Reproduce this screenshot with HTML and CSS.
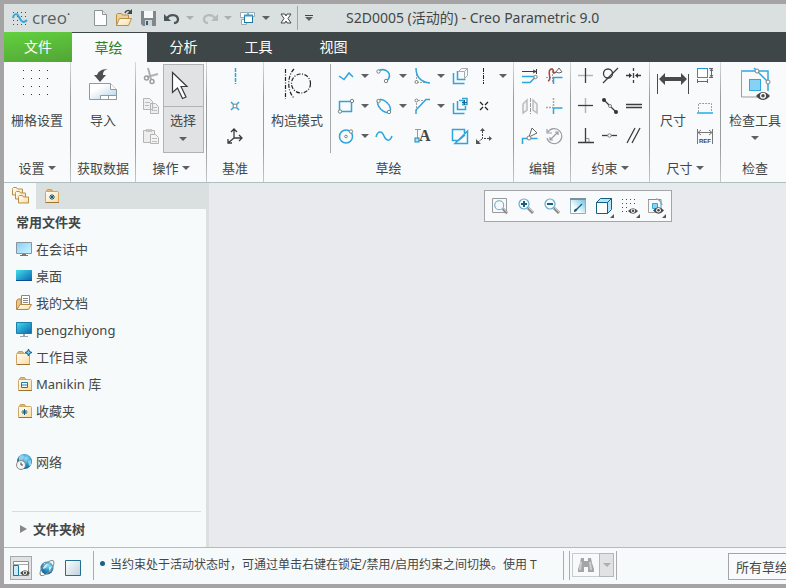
FILE: index.html
```html
<!DOCTYPE html>
<html lang="zh-CN">
<head>
    <meta charset="UTF-8">
    <title>S2D0005 (活动的) - Creo Parametric 9.0</title>
    <link rel="stylesheet" href="styles.css">
</head>
<body>
    <svg class="defs" aria-hidden="true">
        <defs>
            <linearGradient id="g-folder" x1="0" y1="0" x2="1" y2="1"><stop offset="0" stop-color="#fff"/><stop offset="1" stop-color="#fbdc9c"/></linearGradient>
            <linearGradient id="g-screen" x1="0" y1="0" x2="1" y2="1"><stop offset="0" stop-color="#3fe0ea"/><stop offset="1" stop-color="#0d62b0"/></linearGradient>
            <linearGradient id="g-light" x1="0" y1="0" x2="1" y2="1"><stop offset="0" stop-color="#7fd0fb"/><stop offset="1" stop-color="#d4f4ff"/></linearGradient>
            <linearGradient id="g-paper" x1="0" y1="0" x2="1" y2="1"><stop offset="0.3" stop-color="#fff"/><stop offset="1" stop-color="#b4cfe4"/></linearGradient>
            <linearGradient id="g-pane" x1="0" y1="0" x2="1" y2="1"><stop offset="0" stop-color="#fff"/><stop offset="1" stop-color="#bcd2dc"/></linearGradient>
            <radialGradient id="g-globe" cx="0.6" cy="0.3" r="0.8"><stop offset="0" stop-color="#8fe0fa"/><stop offset="0.5" stop-color="#2b93c4"/><stop offset="1" stop-color="#12507e"/></radialGradient>
            <linearGradient id="g-sky" x1="1" y1="0" x2="0" y2="1"><stop offset="0" stop-color="#62bfe0"/><stop offset="0.7" stop-color="#fff"/></linearGradient>
            <symbol id="folder" viewBox="0 0 16 16">
                <path d="M2 3.500l1.500-2h4l1.500 2" fill="#dfb978" stroke="#c9a05a"/>
                <rect x="1.500" y="3.500" width="13" height="11" rx="1" fill="url(#g-folder)" stroke="#cfa663"/>
                <path d="M1.500 14.500h13.500" stroke="#9c7333"/>
            </symbol>
            <symbol id="folder-small" viewBox="0 0 11 9">
                <path d="M0.500 2.500v-1l1-1h3l1 1.500h5v6h-10z" fill="url(#g-folder)" stroke="#b98f4c"/>
            </symbol>
            <symbol id="eye" viewBox="0 0 14 10">
                <path d="M0 5Q7-3 14 5Q7 13 0 5z" fill="#4b4b4b"/>
                <circle cx="7" cy="4.700" r="3" fill="#fff"/><circle cx="7" cy="4.700" r="1.700" fill="#4b4b4b"/>
            </symbol>
            <symbol id="lens" viewBox="0 0 18 18">
                <path d="M11 11l5 5" stroke="#8c8c8c" stroke-width="3"/><path d="M11.500 10.500l5 5" stroke="#d0d0d0"/>
                <circle cx="7" cy="7" r="5" fill="#f4fbff" stroke="#6eaac8" stroke-width="1.200"/>
            </symbol>
        </defs>
    </svg>

    <header class="titlebar">
        <div class="logo">
            <svg width="16" height="16" viewBox="0 0 16 16"><path class="dots" d="M1 2.500h15M1 6.500h15M1 10.500h15M1 14.500h15"/><path d="M1 8C2 3 5 3 7 7s4 7 8 3" fill="none" stroke="#35a8e0" stroke-width="2"/></svg>
            <span class="brand">creo<sup>•</sup></span>
        </div>
        <div class="quick-main">
            <button class="icon" aria-label="新建"><svg viewBox="0 0 18 18"><path d="M3.500 1.500h8l4 4v11h-12z" fill="#fdfdfd" stroke="#8d9494"/><path d="M11.500 1.500v4h4" fill="#e6eaea" stroke="#8d9494"/></svg></button>
            <button class="icon" aria-label="打开"><svg viewBox="0 0 18 18"><path d="M1.500 16.500v-11l1-1h4l1 1.500h6v4" fill="#edd09a" stroke="#b98f48"/><path d="M1.500 16.500l3-7h12l-3 7z" fill="url(#g-folder)" stroke="#b98f48"/><path d="M10 4c1-3 4-3 6-1" fill="none" stroke="#3c4444" stroke-width="1.500"/><path d="M17 0v5h-5z" fill="#3c4444"/></svg></button>
            <button class="icon" aria-label="保存"><svg viewBox="0 0 18 18"><path d="M2 2h15v15H4l-2-2z" fill="#7f898c"/><path d="M5 2h9v7H5z" fill="#f7f9f9"/><path d="M6 11h7v6H6z" fill="#cfd6d8"/><path d="M7 12h2v4H7z" fill="#3c5c74"/></svg></button>
            <button class="icon" aria-label="撤消"><svg viewBox="0 0 18 18"><path d="M4 9c3-4 10-4 11 1 0 2-1 4-4 4" fill="none" stroke="#4b5557" stroke-width="2.300"/><path d="M1 5v7h7z" fill="#4b5557"/></svg></button>
        </div>
        <div class="quick-more">
            <button class="drop pale" aria-label="撤消列表"></button>
            <button class="icon" aria-label="重做"><svg viewBox="0 0 18 18"><path d="M14 9C11 5 4 5 3 10c0 2 1 4 4 4" fill="none" stroke="#b3bbbb" stroke-width="2.300"/><path d="M17 5v7h-7z" fill="#b3bbbb"/></svg></button>
            <button class="drop pale" aria-label="重做列表"></button>
            <button class="icon" aria-label="窗口"><svg viewBox="0 0 18 18"><path d="M1.500 3.500h7v5h-7zM9.500 3.500h6v4h-6zM2.500 10.500h5v5h-5z" fill="#fff" stroke="#9aa9ae"/><rect x="5.500" y="6.500" width="8" height="7" fill="#fff" stroke="#23799c"/><path d="M5 6.500h9" stroke="#2f9dca" stroke-width="2"/></svg></button>
            <button class="drop" aria-label="窗口列表"></button>
            <button class="icon" aria-label="关闭"><svg viewBox="0 0 18 18"><path d="M4 5h4l1 2 1-2h4l-3 4.500 3 4.500h-4l-1-2-1 2H4l3-4.500z" fill="#fff" stroke="#454a44"/></svg></button>
        </div>
        <button class="drop customize" aria-label="自定义"></button>
        <h1 class="title">S2D0005 (活动的) - Creo Parametric 9.0</h1>
    </header>

    <nav class="tabs">
        <button class="tab file">文件</button>
        <button class="tab active">草绘</button>
        <button class="tab">分析</button>
        <button class="tab">工具</button>
        <button class="tab">视图</button>
    </nav>

    <div class="ribbon">
        <section class="group g-setup">
            <div class="tools">
                <button class="big"><svg viewBox="0 0 34 34"><path class="dots-wide" d="M3 3.500h28M3 11.500h28M3 19.500h28M3 27.500h28"/></svg><span>栅格设置</span></button>
            </div>
            <button class="caption more">设置</button>
        </section>

        <section class="group g-data">
            <div class="tools">
                <button class="big"><svg viewBox="0 0 34 34"><path d="M3.500 16.500h21l6 6v10h-27z" fill="url(#g-paper)" stroke="#8e9ca2"/><path d="M24.500 16.500v6h6" fill="#fff" stroke="#8e9ca2"/><path d="M14.500 28.500h16v4h-16zM22.500 28.500v4" fill="#fff" stroke="#8e9ca2"/><path d="M22 2c-7 0-10 3-11 6H8l6 7 6-7h-3c0-3 1-5 5-6z" fill="#4d4f50"/></svg><span>导入</span></button>
            </div>
            <div class="caption">获取数据</div>
        </section>

        <section class="group g-ops">
            <div class="tools">
                <div class="stack">
                    <button class="icon" aria-label="剪切"><svg viewBox="0 0 18 18"><path d="M6 1l3 11M16 7L5 10" stroke="#aeb2b2" stroke-width="2"/><circle cx="4.500" cy="11" r="2" fill="none" stroke="#9b9f9f" stroke-width="1.500"/><circle cx="10" cy="14.500" r="2" fill="none" stroke="#9b9f9f" stroke-width="1.500"/></svg></button>
                    <button class="icon" aria-label="复制"><svg viewBox="0 0 18 18"><path d="M1.500 1.500h6l3 3v8h-9zM8.500 6.500h5l3 3v7h-8z" fill="#efefef" stroke="#b4b4b4"/><path d="M3 5.500h5M3 8.500h4M10 10.500h5M10 13.500h5" stroke="#bdbdbd"/></svg></button>
                    <button class="icon" aria-label="粘贴"><svg viewBox="0 0 18 18"><path d="M1.500 3.500h11v12h-11z" fill="#ededed" stroke="#b4b4b4"/><path d="M4 2h6v3H4z" fill="#c4c4c4"/><path d="M8.500 7.500h5l3 3v6h-8z" fill="#f4f4f4" stroke="#b4b4b4"/><path d="M10 11.500h5M10 14.500h5" stroke="#bdbdbd"/></svg></button>
                </div>
                <div class="select">
                    <button class="select-icon" aria-label="选择"><svg width="24" height="32" viewBox="0 0 24 32"><path d="M4.500 2.500v20l5-4.500 5 10.500 3.500-1.500-5-10.500h6z" fill="#fff" stroke="#3b3b3b" stroke-width="1.200"/></svg></button>
                    <button class="select-text">选择</button>
                </div>
            </div>
            <button class="caption more">操作</button>
        </section>

        <section class="group g-datum">
            <div class="tools">
                <div class="stack">
                    <button class="icon" aria-label="中心线"><svg viewBox="0 0 18 18"><path class="bl" d="M9.500 1v16" stroke-dasharray="4 1"/></svg></button>
                    <button class="icon" aria-label="点"><svg viewBox="0 0 18 18"><path class="bl" d="M5 5l8 8M13 5l-8 8"/><circle class="pt" cx="9" cy="9" r="2"/></svg></button>
                    <button class="icon" aria-label="坐标系"><svg viewBox="0 0 18 18"><path class="dk thick" d="M8 2v9h8M8 11l-6 5M5 5l3-3 3 3M13 8l3 3-3 3M2 12v4h4"/></svg></button>
                </div>
            </div>
            <div class="caption">基准</div>
        </section>

        <section class="group g-sketch">
            <div class="tools">
                <button class="big construct"><svg viewBox="0 0 34 34"><g fill="none" stroke="#222" stroke-width="1.200" stroke-dasharray="4 1.500 1 1.500"><path d="M5.500 2v30"/><path d="M14 2C7 9 7 24 14 31"/><circle cx="21" cy="16.500" r="9.500"/></g></svg><span>构造模式</span></button>
                <div class="grid sketch-grid">
                    <div class="cell"><button class="icon" aria-label="线"><svg viewBox="0 0 18 18"><path class="bl" d="M2 9l5 3.500 5-6.500 4 4"/></svg></button><button class="drop" aria-label="线选项"></button></div>
                    <div class="cell"><button class="icon" aria-label="弧"><svg viewBox="0 0 18 18"><path class="bl" d="M3 4c8-4 16 3 8 11"/><circle class="pt" cx="3.500" cy="4.500" r="1.700"/><circle class="pt" cx="11" cy="14" r="1.700"/></svg></button><button class="drop" aria-label="弧选项"></button></div>
                    <div class="cell"><button class="icon" aria-label="圆角"><svg viewBox="0 0 18 18"><path class="dash" d="M3.500 4v11.500h12"/><path class="bl" d="M3 1c0 9 5 14 14 15"/><circle class="pt" cx="3.500" cy="15" r="1.500"/></svg></button><button class="drop" aria-label="圆角选项"></button></div>
                    <div class="cell"><button class="icon" aria-label="偏移"><svg viewBox="0 0 18 18"><path d="M7.500 4.500h6v7M7.500 4.500l3-3h6v7l-3 3M13.500 4.500l3-3" fill="none" stroke="#a8acad"/><path class="bl" d="M2.500 6v10.500h11M6.500 4v8.500h8"/></svg></button></div>
                    <div class="cell"><button class="icon" aria-label="构造中心线"><svg viewBox="0 0 18 18"><path d="M8.500 1v16" stroke="#222" stroke-dasharray="4 1 1 1"/></svg></button><button class="drop" aria-label="中心线选项"></button></div>

                    <div class="cell"><button class="icon" aria-label="矩形"><svg viewBox="0 0 18 18"><rect class="bl" x="2.500" y="4.500" width="12" height="10"/><circle class="pt" cx="15" cy="4" r="1.700"/><circle class="pt" cx="3" cy="14.500" r="1.700"/></svg></button><button class="drop" aria-label="矩形选项"></button></div>
                    <div class="cell"><button class="icon" aria-label="椭圆"><svg viewBox="0 0 18 18"><ellipse class="bl" cx="9" cy="9" rx="8" ry="4.500" transform="rotate(45 9 9)"/><circle class="pt" cx="3.500" cy="4" r="1.700"/><circle class="pt" cx="14" cy="15" r="1.700"/></svg></button><button class="drop" aria-label="椭圆选项"></button></div>
                    <div class="cell"><button class="icon" aria-label="倒角"><svg viewBox="0 0 18 18"><path class="dash" d="M3.500 14V3.500H12"/><path class="bl" d="M17 2.500h-4L3 13v4"/><circle class="pt" cx="3.500" cy="3.500" r="1.500"/></svg></button><button class="drop" aria-label="倒角选项"></button></div>
                    <div class="cell"><button class="icon" aria-label="加厚"><svg viewBox="0 0 18 18"><path class="bl" d="M2.500 6v10.500h11M6.500 4v8.500h8V9"/><path class="bl" d="M8 3.500h4.500v5M11 1.500h5v6h-5"/><path d="M13.500 3v5M11 5.500h5" stroke="#18688f"/></svg></button></div>
                    <div class="cell"><button class="icon" aria-label="构造点"><svg viewBox="0 0 18 18"><path d="M5 5l3 3M13 5l-3 3M5 13l3-3M13 13l-3-3" stroke="#222" stroke-width="1.300"/></svg></button></div>

                    <div class="cell"><button class="icon" aria-label="圆"><svg viewBox="0 0 18 18"><circle class="bl" cx="9" cy="9.500" r="6.500"/><circle class="pt" cx="9" cy="9.500" r="1.300"/><circle class="pt" cx="14" cy="4.500" r="1.700"/></svg></button><button class="drop" aria-label="圆选项"></button></div>
                    <div class="cell"><button class="icon" aria-label="样条"><svg viewBox="0 0 18 18"><path class="bl" d="M1 10c2-7 6-6 8-1s6 6 8 0"/></svg></button></div>
                    <div class="cell"><button class="icon" aria-label="文本"><svg viewBox="0 0 18 18"><path d="M2 2.500h6M4.500 3v9" fill="none" stroke="#9a9a9a"/><text class="letter" x="6" y="14">A</text><rect x="2" y="11" width="4" height="4" fill="#a9e2f8" stroke="#1f86b4"/></svg></button></div>
                    <div class="cell"><button class="icon" aria-label="投影"><svg viewBox="0 0 18 18"><path class="bl" d="M1.500 2.500h12v6l-6 5h-6zM16.500 4v12.500H4z"/></svg></button></div>
                    <div class="cell"><button class="icon" aria-label="构造坐标系"><svg viewBox="0 0 18 18"><path d="M7.500 4v7.500h7M7 12l-4 3" fill="none" stroke="#444" stroke-dasharray="2 1"/><path d="M5 4l2.500-3 2.500 3zM14 9l3 2.500-3 2.500zM1 12v5h5z" fill="#555"/></svg></button></div>
                </div>
            </div>
            <div class="caption">草绘</div>
        </section>

        <section class="group g-edit">
            <div class="tools">
                <div class="grid cols-2">
                    <button class="icon" aria-label="修改"><svg viewBox="0 0 18 18"><path class="dk" d="M1 4.500h15M15.500 2v5M12 3l3 1.500-3 1.500"/><path class="bl" d="M1 9.500h12M1 15.500h8l5-5"/><circle class="pt" cx="14.500" cy="10" r="1.700"/></svg></button>
                    <button class="icon" aria-label="删除段"><svg viewBox="0 0 18 18"><path class="dash" d="M1 10.500h8M7.500 1v15"/><path d="M3 14c5-1-2-10 3-12 5 0 0 7 5 3" fill="none" stroke="#b14139" stroke-width="1.500"/><path d="M11 5l3-4 3 4-3 1z" fill="#fff" stroke="#666"/><path class="bl" d="M8.500 17v-6.500h9"/></svg></button>
                    <button class="icon" aria-label="镜像"><svg viewBox="0 0 18 18"><path d="M2 16V7l4-4v10zM16 16V7l-4-4v10z" fill="#f4f4f4" stroke="#bcbcbc" stroke-width="1.500"/><path d="M9.500 1v16" stroke="#999" stroke-dasharray="4 1"/></svg></button>
                    <button class="icon" aria-label="拐角"><svg viewBox="0 0 18 18"><path d="M8.500 1v8M1 10.500h7" stroke="#a9a9a9" stroke-width="1.500" stroke-dasharray="2 1"/><path class="bl" d="M8.500 17v-6h9"/></svg></button>
                    <button class="icon" aria-label="分割"><svg viewBox="0 0 18 18"><path class="bl" d="M1.500 17v-5.500h15"/><path d="M8 10l3-9 5 5z" fill="#fff" stroke="#666"/><circle class="pt" cx="8" cy="11" r="2"/></svg></button>
                    <button class="icon" aria-label="旋转调整大小"><svg viewBox="0 0 18 18"><path d="M3 5a7.500 7.500 0 1 1-1 6M2 2v4h5M5 13l8-8M5 10v3h3M10 5h3v3" fill="none" stroke="#9b9fa0" stroke-width="1.200"/></svg></button>
                </div>
            </div>
            <div class="caption">编辑</div>
        </section>

        <section class="group g-constrain">
            <div class="tools">
                <div class="grid cols-3">
                    <button class="icon" aria-label="竖直"><svg viewBox="0 0 18 18"><path class="gy" d="M1 8.500h15"/><path class="dk thick" d="M8.500 1v15"/></svg></button>
                    <button class="icon" aria-label="相切"><svg viewBox="0 0 18 18"><circle class="dk thick" cx="7" cy="6.500" r="4.500"/><path class="dk thick" d="M2 16L17 1"/></svg></button>
                    <button class="icon" aria-label="对称"><svg viewBox="0 0 18 18"><path class="dk thick" d="M8.500 1v3M8.500 6v5M8.500 13v3M1 8.500h4M12 8.500h4"/><path d="M4 6l3 2.500-3 2.500zM13 6l-3 2.500 3 2.500z" fill="#333"/></svg></button>
                    <button class="icon" aria-label="水平"><svg viewBox="0 0 18 18"><path class="gy" d="M8.500 1v15"/><path class="dk thick" d="M1 8.500h15"/></svg></button>
                    <button class="icon" aria-label="中点"><svg viewBox="0 0 18 18"><path class="dk thick" d="M3 3l12 12"/><circle cx="3" cy="3" r="2" fill="#333"/><circle cx="15" cy="15" r="2" fill="#333"/><circle class="pt" cx="9" cy="9" r="1.500"/></svg></button>
                    <button class="icon" aria-label="相等"><svg viewBox="0 0 18 18"><path class="dk thick" d="M1 7.500h16M1 10.500h16"/></svg></button>
                    <button class="icon" aria-label="垂直"><svg viewBox="0 0 18 18"><path d="M9 11.500h3v4" fill="none" stroke="#999"/><path class="dk thick" d="M8.500 1v14M1 15.500h16"/></svg></button>
                    <button class="icon" aria-label="重合"><svg viewBox="0 0 18 18"><path class="dk thick" d="M1 8.500h15"/><circle class="pt" cx="8.500" cy="8.500" r="1.700"/></svg></button>
                    <button class="icon" aria-label="平行"><svg viewBox="0 0 18 18"><path class="dk thick" d="M2 16L10 1M7 16l8-15"/></svg></button>
                </div>
            </div>
            <button class="caption more">约束</button>
        </section>

        <section class="group g-dim">
            <div class="tools">
                <button class="big"><svg viewBox="0 0 34 34"><path d="M1.500 7v20M32.500 7v20" stroke="#4a4a4a"/><path d="M3 12l6-6v4h16V6l6 6-6 6v-4H9v4z" fill="#4a4a4a"/></svg><span>尺寸</span></button>
                <div class="stack">
                    <button class="icon" aria-label="周长"><svg viewBox="0 0 18 18"><rect x="1.500" y="1.500" width="10" height="9" fill="#fff" stroke="#1f96cf"/><path d="M13 1.500h4M13 10.500h4M15.500 2v8M14 4l1.500-2L17 4M14 8l1.500 2L17 8M1.500 12v4M11.500 12v4M2 14.500h9" fill="none" stroke="#666"/></svg></button>
                    <button class="icon" aria-label="基线"><svg viewBox="0 0 18 18"><path class="dash" d="M2.500 15V6.500h13V15"/><path d="M1 16h16" stroke="#55bfee" stroke-width="2"/></svg></button>
                    <button class="icon" aria-label="参考"><svg viewBox="0 0 18 18"><path d="M1.500 2v15M16.500 2v15M2 5.500h14M5 3L2 5.500 5 8M13 3l3 2.500L13 8" fill="none" stroke="#777"/><text class="ref" x="3" y="16">REF</text></svg></button>
                </div>
            </div>
            <button class="caption more">尺寸</button>
        </section>

        <section class="group g-inspect">
            <div class="tools">
                <button class="big more-below"><svg viewBox="0 0 34 34"><path d="M3.500 5v25h18" fill="none" stroke="#9b9b9b"/><path d="M3 4h27v20M16 1l15 15" fill="none" stroke="#2fa8df" stroke-width="1.500"/><rect x="11.500" y="12.500" width="11" height="11" fill="#86d2f5" stroke="#2fa8df"/><circle class="pt" cx="19" cy="4" r="2"/><circle class="pt" cx="30" cy="15" r="2"/><use href="#eye" x="18" y="24" width="14" height="10"/></svg><span>检查工具</span></button>
            </div>
            <div class="caption">检查</div>
        </section>
    </div>

    <main class="workspace">
        <aside class="sidebar">
            <div class="side-tabs">
                <button class="side-tab current" aria-label="文件夹浏览器"><svg width="18" height="18" viewBox="0 0 18 18"><use href="#folder-small" x="1" y="0" width="11" height="9"/><use href="#folder-small" x="4" y="4" width="11" height="9"/><use href="#folder-small" x="7" y="8" width="11" height="9"/></svg></button>
                <button class="side-tab" aria-label="收藏夹"><svg width="16" height="16" viewBox="0 0 16 16"><use href="#folder"/><path class="star" d="M8 6v6M5 9h6M6 7l4 4M10 7l-4 4"/></svg></button>
            </div>
            <div class="places">
                <h2>常用文件夹</h2>
                <a href="#"><svg viewBox="0 0 16 16"><path d="M0.500 1.500h15v11h-15z" fill="url(#g-light)" stroke="#8b9499"/><path d="M6 13h4v1h2v1H4v-1h2z" fill="#777"/></svg>在会话中</a>
                <a href="#"><svg viewBox="0 0 16 16"><path d="M0 2h16v11H0z" fill="url(#g-screen)"/><path d="M0 12.500h16" stroke="#0a4f96"/></svg>桌面</a>
                <a href="#"><svg viewBox="0 0 16 16"><path d="M0.500 14.500V6l1.500-2h3v10z" fill="#e9c88e" stroke="#b38a45"/><path d="M5.500 0.500h8v10h-8z" fill="#fff" stroke="#888"/><path d="M7 3.500h5M7 5.500h5M7 7.500h5" stroke="#888"/><path d="M1 14.500l3-5h11.500l-3 5z" fill="url(#g-folder)" stroke="#b38a45"/></svg>我的文档</a>
                <a href="#"><svg viewBox="0 0 16 16"><path d="M0.500 0.500h15v11h-15z" fill="url(#g-screen)" stroke="#1b7cae"/><path d="M7 12h2v2h3v1H4v-1h3z" fill="#9aa7ad"/></svg>pengzhiyong</a>
                <a href="#"><svg viewBox="0 0 16 16"><use href="#folder" x="-1" y="1" width="16" height="16"/><path d="M12.500 0l1 2.500 2.500 1-2.500 1-1 2.500-1-2.500-2.500-1 2.500-1z" fill="#6ccdf0" stroke="#125c80"/></svg>工作目录</a>
                <a href="#"><svg viewBox="0 0 16 16"><use href="#folder" x="1" width="16" height="16"/><path d="M5.500 6.500h6v5h-6zM5.500 9h6" fill="#fff" stroke="#1b7aa6"/></svg>Manikin 库</a>
                <a href="#"><svg viewBox="0 0 16 16"><use href="#folder" x="1" width="16" height="16"/><path class="star" d="M8.500 6v6M5.500 9h6M6.500 7l4 4M10.500 7l-4 4"/></svg>收藏夹</a>
                <a href="#" class="network"><svg viewBox="0 0 16 16"><circle cx="8.500" cy="7.500" r="7.500" fill="url(#g-globe)"/><path d="M3 3c3-3 5-2 5 0s-2 3-5 4zM12 7l3-1v5l-2 1z" fill="#8fd0ea"/><circle cx="5" cy="11" r="4.500" fill="#f4f4f4" stroke="#8a8a8a"/><path d="M5 8.500V11h2" fill="none" stroke="#444"/></svg>网络</a>
            </div>
            <button class="tree">文件夹树</button>
        </aside>

        <div class="canvas">
            <div class="view-tools">
                <button aria-label="重新调整"><svg viewBox="0 0 18 18"><path d="M1.500 1.500h14v14h-14z" fill="#f9f9f9" stroke="#9a9a9a"/><use href="#lens" x="2" y="2" width="16" height="16"/></svg></button>
                <button aria-label="放大"><svg viewBox="0 0 18 18"><use href="#lens"/><path d="M7 4v6M4 7h6" stroke="#125f88" stroke-width="2"/></svg></button>
                <button aria-label="缩小"><svg viewBox="0 0 18 18"><use href="#lens"/><path d="M4 7h6" stroke="#125f88" stroke-width="2"/></svg></button>
                <button aria-label="重画"><svg viewBox="0 0 18 18"><path d="M1.500 1.500h15v15h-15z" fill="url(#g-sky)" stroke="#8eb0be"/><path d="M1 2h16" stroke="#7d9099" stroke-width="2"/><path d="M5 15c0-4 2-3 4-4-1 3-2 4-4 4z" fill="#165f7c"/><path d="M8 12l5-5" stroke="#165f7c" stroke-width="1.300"/></svg></button>
                <button aria-label="显示样式" class="corner"><svg viewBox="0 0 18 18"><path d="M1.500 5.500h11v11h-11z" fill="#fff" stroke="#145f84"/><path d="M1.500 5.500l4-4h11l-4 4zM12.500 16.500l4-4v-11l-4 4z" fill="#b5e6f8" stroke="#145f84"/></svg></button>
                <button aria-label="栅格显示" class="corner"><svg viewBox="0 0 18 18"><path class="dots" d="M1 2.500h16M1 6.500h16M1 10.500h8M1 14.500h8"/><use href="#eye" x="7" y="10" width="10" height="8"/></svg></button>
                <button aria-label="草绘器显示" class="corner"><svg viewBox="0 0 18 18"><path d="M1.500 3v12.500h7" fill="none" stroke="#a0a0a0"/><path d="M1 2.500h13v9" fill="none" stroke="#2fa8df"/><path d="M5.500 6.500h5v5h-5z" fill="#86d2f5" stroke="#2fa8df"/><path d="M9 2c3 0 5 3 6 6" fill="none" stroke="#9aa4a8" stroke-width="1.500"/><use href="#eye" x="6" y="9" width="11" height="9"/></svg></button>
            </div>
        </div>
    </main>

    <footer class="status">
        <button class="toggle on" aria-label="导航器"><svg viewBox="0 0 18 18"><path d="M1.500 2.500h15v14h-15z" fill="#fff" stroke="#8e8e8e"/><path d="M2 5.500h14" stroke="#aaa"/><path d="M1.500 6.500h5v10h-5z" fill="#c7edfa" stroke="#1a769d"/><use href="#eye" x="8" y="10" width="10" height="8"/></svg></button>
        <button class="toggle" aria-label="浏览器"><svg viewBox="0 0 18 18"><circle cx="9" cy="9" r="6.500" fill="url(#g-globe)"/><path d="M6 4l4 1-2 4-3 1zM11 8l3-1-1 5-2 1z" fill="#c4edfc"/><ellipse cx="9" cy="9" rx="9.500" ry="4" transform="rotate(-48 9 9)" fill="none" stroke="#888"/></svg></button>
        <button class="toggle" aria-label="全屏"><svg viewBox="0 0 18 18"><path d="M1.500 1.500h15v15h-15z" fill="url(#g-pane)" stroke="#236f92"/></svg></button>
        <p class="message">当约束处于活动状态时，可通过单击右键在锁定/禁用/启用约束之间切换。使用 T</p>
        <div class="find">
            <button class="find-icon" aria-label="查找"><svg width="18" height="18" viewBox="0 0 18 18"><path d="M4 2h3v3h4V2h3l1 5 2 6v3h-6v-5H7v5H1v-3l2-6z" fill="#a3a5a6"/><path d="M4 6l-1 8M13 6l1 8" stroke="#cfcfcf" stroke-width="2"/></svg></button>
            <button class="drop pale" aria-label="查找选项"></button>
        </div>
        <div class="filter">
            <select aria-label="过滤器"><option>所有草绘</option></select>
        </div>
    </footer>
</body>
</html>
```

FILE: styles.css
```css
* { box-sizing: border-box; }
body {
    margin: 0;
    min-height: 100vh;
    display: flex;
    flex-direction: column;
    border: 4px solid #a5a3a3;
    border-right: none;
    overflow: hidden;
    background: #f8fafc;
    color: #434748;
    font: 13px/20px "Noto Sans", "Noto Sans CJK SC", sans-serif;
}
button { padding: 0; border: none; background: none; color: inherit; font: inherit; cursor: pointer; }
svg { display: block; flex: none; }
h1, h2, p { margin: 0; }
.defs { position: absolute; width: 0; height: 0; }

/* icon strokes */
.bl { fill: none; stroke: #2fa5dc; stroke-width: 1.5; }
.dk { fill: none; stroke: #3d3d3d; }
.thick { stroke-width: 1.3; }
.gy { stroke: #b5b5b5; stroke-width: 1.5; }
.pt { fill: #fff; stroke: #808080; }
.dash { fill: none; stroke: #a0a0a0; stroke-dasharray: 2 1; }
.star { fill: none; stroke: #145c7f; }
.dots { stroke: #4a4f50; stroke-dasharray: 1 3; }
.dots-wide { stroke: #333; stroke-dasharray: 1 7; }
.letter { fill: #444; font: bold 16px "Liberation Serif", serif; }
.ref { fill: #444; font: bold 6px "Liberation Sans", sans-serif; }

.icon { width: 18px; height: 18px; flex: none; }
.icon svg { width: 18px; height: 18px; }
.drop { display: flex; align-items: center; justify-content: center; width: 19px; height: 18px; flex: none; }
.drop::before, .more::after, .more-below::after, .select-text::after {
    content: "";
    border: 4px solid transparent;
    border-top-color: #5c6062;
    border-bottom: none;
}
.drop.pale::before { border-top-color: #a9b0b0; }

/* title bar */
.titlebar { display: flex; align-items: center; height: 28px; padding-left: 8px; background: #dae0df; }
.logo { display: flex; align-items: center; gap: 4px; width: 79px; }
.brand { color: #555f61; font: 500 17px/20px "Open Sans", sans-serif; }
.brand sup { font-size: 8px; line-height: 8px; }
.quick-main { display: flex; gap: 6px; }
.quick-more { display: flex; align-items: center; gap: 2px; height: 24px; padding-right: 2px; border-right: 1px solid #9fa5a5; }
.quick-more .drop { width: 18px; margin-left: -2px; }
.quick-more .drop:first-child { margin-left: 0; }
.customize { flex-direction: column; gap: 1px; width: 22px; }
.customize::before { order: 2; }
.customize::after { content: ""; width: 8px; height: 1px; background: #444; }
.title { margin-left: 26px; font-size: 14px; font-weight: normal; }

/* tabs */
.tabs { display: flex; height: 30px; background: #3e4648; }
.tab { width: 75px; padding-right: 2px; color: #fff; font-size: 14px; }
.tab.file { width: 68px; padding: 0; background: linear-gradient(170deg, #62d13f, #52a436); }
.tab.active { background: #f8fafc; color: #2e7d1e; margin-top: 1px; }

/* ribbon */
.ribbon { display: flex; height: 121px; border-bottom: 1px solid #aebfbd; }
.group { display: flex; flex-direction: column; flex: none; padding: 2px 0 4px; border-right: 1px solid; border-image: linear-gradient(#d8dcdc, #979c9c 30% 70%, #c4c9c9) 1; }
.tools { display: flex; flex: 1; justify-content: center; align-items: flex-start; }
.caption { display: flex; align-items: center; justify-content: center; gap: 3px; height: 20px; white-space: nowrap; }
.big { display: flex; flex-direction: column; align-items: center; padding-top: 3px; white-space: nowrap; }
.big svg { width: 34px; height: 34px; margin-bottom: 9px; }
.more-below::after { margin-top: 6px; }
.stack { display: flex; flex-direction: column; gap: 12px; padding-top: 3px; }
.grid { display: grid; gap: 12px 6px; align-content: start; padding-top: 3px; }
.cols-2 { grid-template-columns: 18px 18px; }
.cols-3 { grid-template-columns: 18px 18px 18px; }
.cell { display: flex; }
.g-setup { width: 67px; }
.g-data { width: 65px; }
.g-ops { width: 71px; }
.g-ops .tools { gap: 3px; padding-left: 3px; }
.g-datum { width: 57px; }
.g-sketch { width: 250px; }
.g-edit { width: 57px; }
.g-constrain { width: 79px; }
.g-dim { width: 71px; }
.g-dim .tools { gap: 6px; }
.g-inspect { width: 68px; border: none; }
.construct { justify-content: flex-start; width: 67px; height: 89px; border-right: 1px solid #a5aaaa; }
.sketch-grid { grid-template-columns: 38px 38px 38px 24px 38px; column-gap: 0; padding-left: 6px; }
.select { display: flex; flex-direction: column; width: 41px; height: 89px; border: 1px solid #b0b2b3; background: #e0e2e4; }
.select-icon { height: 42px; padding: 0 0 0 4px; border-bottom: 1px solid #b0b2b3; }
.select-text { display: flex; flex: 1; flex-direction: column; align-items: center; padding-top: 3px; gap: 7px; }

/* navigator */
.workspace { display: flex; flex: 1; }
.sidebar { display: flex; flex-direction: column; width: 205px; border-right: 3px solid #dae0df; background: #f7fafb; }
.side-tabs { display: flex; height: 26px; background: #dae0df; }
.side-tab { display: flex; align-items: center; justify-content: center; width: 32px; }
.side-tab.current { background: #f7fafb; }
.places { display: flex; flex-direction: column; flex: 1; padding-left: 12px; }
.places h2 { padding: 3px 0; font-size: 13px; line-height: 20px; }
.places a { display: flex; align-items: center; gap: 4px; height: 27px; color: inherit; text-decoration: none; }
.places a svg { width: 16px; height: 16px; }
.places .network { margin-top: 24px; }
.tree { display: flex; align-items: center; gap: 6px; height: 36px; margin: 0 5px 0 8px; padding: 0 0 2px 8px; border-top: 1px solid #d8dcdd; font-weight: bold; }
.tree::before { content: ""; border: 4px solid transparent; border-left: 7px solid #888; border-right: none; }

/* graphics area */
.canvas { display: flex; flex: 1; align-items: flex-start; justify-content: flex-end; padding: 7px 114px 0 0; background: #e8eaee; }
.view-tools { display: flex; padding: 2px; border: 1px solid #a3a5a6; background: #f8fafc; }
.view-tools button { display: flex; align-items: center; justify-content: center; position: relative; width: 26px; height: 26px; }
.view-tools svg { width: 18px; height: 18px; }
.corner::after { content: ""; position: absolute; right: 3px; bottom: 1px; border: 2px solid #555; border-top-color: transparent; border-left-color: transparent; }

/* status bar */
.status { display: flex; align-items: flex-start; height: 37px; padding: 3px 0 0 6px; border-top: 1px solid #aebfbd; background: #f7fafb; }
.toggle { display: flex; align-items: center; justify-content: center; width: 22px; height: 24px; margin: 5px 4px 0 0; }
.toggle svg { width: 18px; height: 18px; }
.toggle.on { border: 1px solid #a6a9aa; background: #e0e2e4; }
.message { display: flex; flex: 1; gap: 5px; height: 29px; margin: 0 5px; padding: 5px 0 0 6px; border: 1px solid #a9adae; border-width: 0 1px; font-size: 12px; line-height: 18px; white-space: nowrap; }
.message::before { content: ""; width: 5px; height: 5px; margin-top: 5px; border-radius: 50%; background: #1c6288; }
.find { display: flex; height: 29px; padding: 2px 2px 3px; border: 1px solid #a9adae; border-width: 0 1px; }
.find-icon { width: 27px; padding-left: 4px; border: 1px solid #c9cccd; border-right: none; }
.find .drop { width: 15px; height: 24px; border: 1px solid #b4b6b7; background: #e0e2e4; }
.filter { width: 58px; margin: 2px 0 0 111px; overflow: hidden; }
.filter select { width: 150px; height: 27px; padding-left: 3px; border: 1px solid #a3a5a6; background: #f8fafc; color: inherit; font: inherit; }
```
